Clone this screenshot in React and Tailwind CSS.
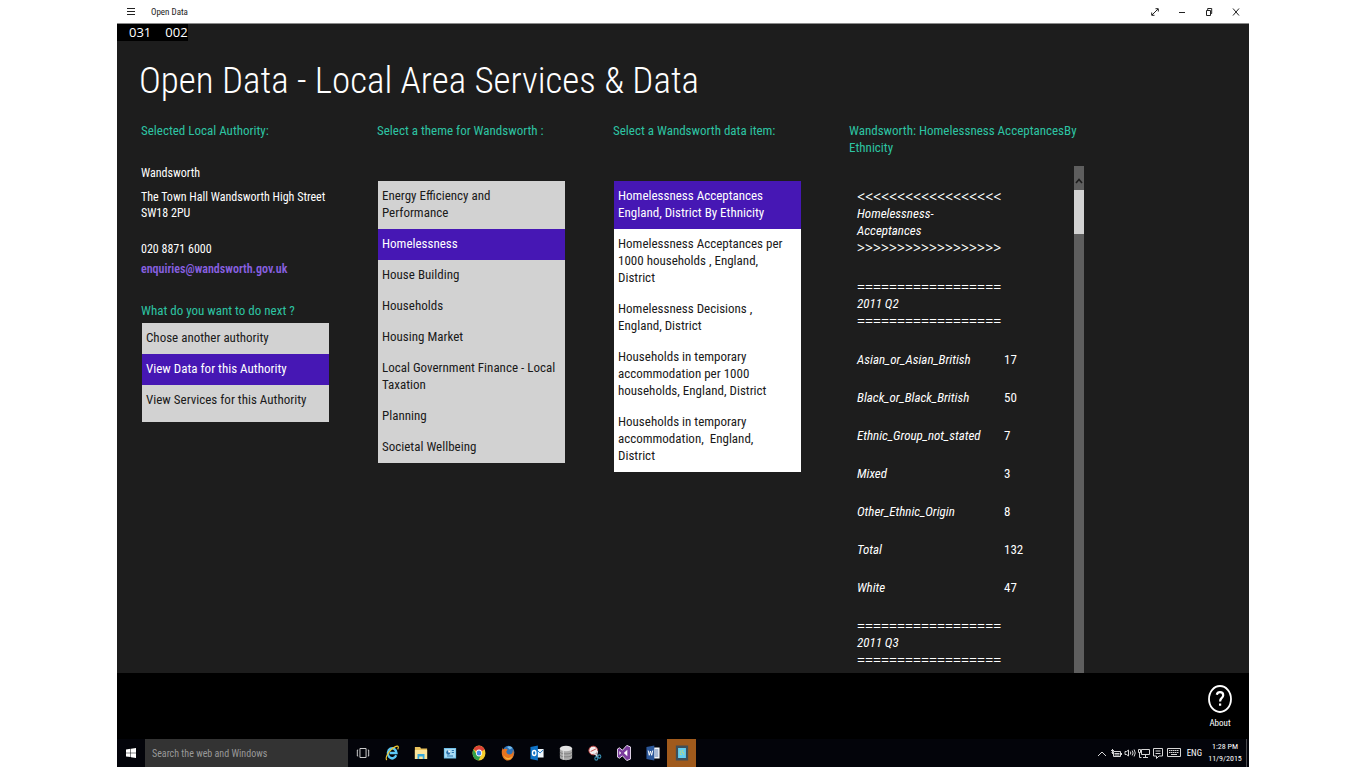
import { useState } from "react";

const nextSteps = ["Chose another authority", "View Data for this Authority", "View Services for this Authority"];

const themes = [
  "Energy Efficiency and Performance",
  "Homelessness",
  "House Building",
  "Households",
  "Housing Market",
  "Local Government Finance - Local Taxation",
  "Planning",
  "Societal Wellbeing",
];

const dataItems = [
  "Homelessness Acceptances England, District By Ethnicity",
  "Homelessness Acceptances per 1000 households , England, District",
  "Homelessness Decisions , England, District",
  "Households in temporary accommodation per 1000 households, England, District",
  "Households in temporary accommodation,\u00a0 England, District",
];

const figures = [
  ["Asian_or_Asian_British", 17],
  ["Black_or_Black_British", 50],
  ["Ethnic_Group_not_stated", 7],
  ["Mixed", 3],
  ["Other_Ethnic_Origin", 8],
  ["Total", 132],
  ["White", 47],
];

function OptionList({ label, items, initial, listClass, itemClass = "pr-1.5" }) {
  const [selected, setSelected] = useState(initial);
  return (
    <ul aria-label={label} className={`ml-px w-[187px] ${listClass}`}>
      {items.map((item, i) => (
        <li key={item}>
          <button
            type="button"
            onClick={() => setSelected(i)}
            className={`block w-full pt-1.5 pb-2 pl-1 text-left ${itemClass} ${
              i === selected ? "bg-[#4617b4] text-white" : "text-[#1a1a1a]"
            }`}
          >
            {item}
          </button>
        </li>
      ))}
    </ul>
  );
}

function Rule({ char }) {
  return <div className="font-['Noto_Sans'] text-[14px] leading-[17px] whitespace-nowrap not-italic">{char.repeat(18)}</div>;
}

function Banner({ open, close, children }) {
  return (
    <tr>
      <th colSpan={2} scope="colgroup" className="py-[11px] text-left font-normal italic">
        <Rule char={open} />
        <div className="w-[100px]">{children}</div>
        <Rule char={close} />
      </th>
    </tr>
  );
}

function TitleBar() {
  const button = "flex h-6 w-[27px] items-center justify-center";
  return (
    <header className="flex h-6 shrink-0 items-center border-b border-[#8a8a8a] bg-white text-[#222]">
      <button type="button" aria-label="Menu" className={button}>
        <svg className="h-2 w-2" viewBox="0 0 8 8" stroke="currentColor">
          <path d="M0 .5h8M0 3.5h8M0 6.5h8" />
        </svg>
      </button>
      <span className="ml-[7px] pt-0.5 text-[9px]">Open Data</span>
      <div className="ml-auto flex">
        <button type="button" aria-label="Full screen" className={button}>
          <svg className="h-2 w-2" viewBox="0 0 8 8" fill="none" stroke="currentColor">
            <path d="M1 7l6-6M4.5.7h2.8v2.8M.7 4.5v2.8h2.8" />
          </svg>
        </button>
        <button type="button" aria-label="Minimize" className={button}>
          <svg className="h-2 w-2" viewBox="0 0 8 8" stroke="currentColor">
            <path d="M1 4.5h6" />
          </svg>
        </button>
        <button type="button" aria-label="Restore" className={button}>
          <svg className="h-2 w-2" viewBox="0 0 8 8" fill="none" stroke="currentColor">
            <path d="M1.5 2.5h4v5h-4zM2.7 2.5v-2h4v5h-1.2" />
          </svg>
        </button>
        <button type="button" aria-label="Close" className={button}>
          <svg className="h-2 w-2" viewBox="0 0 8 8" stroke="currentColor">
            <path d="M1 .5l6 7M7 .5l-6 7" />
          </svg>
        </button>
      </div>
    </header>
  );
}

function ScrollBar() {
  return (
    <div className="w-2.5 shrink-0 bg-[#5e5e5e]">
      <div className="flex h-6 items-center justify-center pt-1.5">
        <svg className="h-1.5 w-2" viewBox="0 0 8 6" fill="none" stroke="#1d1d1d" strokeWidth="1.6">
          <path d="M1 5l3-3.5L7 5" />
        </svg>
      </div>
      <div className="h-11 bg-[#d2d2d2]" />
    </div>
  );
}

const taskIcons = [
  {
    name: "Task View",
    art: (
      <g fill="none" stroke="#d8d8d8">
        <path d="M4.5 3.5h7v9h-7zM2.5 5h-1v6h1M13.5 5h1v6h-1" />
      </g>
    ),
  },
  {
    name: "Internet Explorer",
    art: (
      <>
        <path d="M12.8 10.3a5 5 0 1 1 .4-2.3H5.2" fill="none" stroke="#5cc8f5" strokeWidth="2.6" />
        <path d="M2.2 15c-2.4-1.4.8-7 5-10.4C11 1.5 15 .2 15.2 2c.1.7-.2 1.5-.7 2.3" fill="none" stroke="#f3c92e" strokeWidth="1.3" />
      </>
    ),
  },
  {
    name: "File Explorer",
    art: (
      <>
        <path d="M1 2h6l1 1.5h7V14H1z" fill="#e9c25d" />
        <path d="M1 5h14v9H1z" fill="#fbe59b" />
        <path d="M4 9h8v5h-2v-2.5H6V14H4z" fill="#37a9dc" />
      </>
    ),
  },
  {
    name: "Control Panel",
    art: (
      <>
        <path d="M1 3h14v10.5H1z" fill="#6fc0ea" />
        <path d="M2 4h12v8.5H2z" fill="#a9dcf5" />
        <circle cx="6" cy="7.5" r="2.3" fill="#276ea8" />
        <path d="M6 7.5V5a2.5 2.5 0 0 1 2.5 2.5z" fill="#fff" />
        <path d="M10 5.5h2.5M10 7.5h2.5M4.5 11h7" stroke="#246fa9" />
      </>
    ),
  },
  {
    name: "Chrome",
    art: (
      <>
        <circle cx="8" cy="8" r="7.4" fill="#f6ce2e" />
        <path d="M8 8L1.7 4.2A7.4 7.4 0 0 1 14.5 4.5z" fill="#dd4337" />
        <path d="M1.7 4.2A7.4 7.4 0 0 0 7.5 15.4L10.5 9.5 8 8 5.2 9.5z" fill="#2fa04e" />
        <circle cx="8" cy="8" r="3.4" fill="#fff" />
        <circle cx="8" cy="8" r="2.6" fill="#4387ed" />
      </>
    ),
  },
  {
    name: "Firefox",
    art: (
      <>
        <circle cx="8.5" cy="7.5" r="6.8" fill="#2d72b8" />
        <path d="M7 2c2-1.5 5-.5 6 1l-3 1.500z" fill="#79bde8" />
        <path d="M2 2.5c0 1 .3 1.5.6 2C4 3.5 6 3.5 7.5 4.5L6 6.5c.5 3 4 4 6.5 2 1-1 1.2-2.500 1-4 3 5-.2 11-5.500 11S.2 10 1 5.5z" fill="#e8741f" />
        <path d="M3 10c2 3.500 7 4 10 1-1 3-4 4-6 3.500S3.300 12 3 10z" fill="#f7b438" />
      </>
    ),
  },
  {
    name: "Outlook",
    art: (
      <>
        <path d="M8 4h7.5v8.5H8z" fill="#f2f8fd" />
        <path d="M8 5l3.5 3L15 5" fill="none" stroke="#1272c4" />
        <path d="M.5 2L9 .5v15L.5 14z" fill="#0f72c6" />
        <ellipse cx="4.8" cy="8" rx="2" ry="2.5" fill="none" stroke="#fff" strokeWidth="1.5" />
      </>
    ),
  },
  {
    name: "Database",
    art: (
      <>
        <path d="M1 3.5v9c0 3.5 14 3.5 14 0v-9z" fill="#a9a9a9" />
        <ellipse cx="8" cy="3.5" rx="7" ry="2.8" fill="#e2e2e2" />
        <path d="M1 7c1 2.5 13 2.5 14 0M1 10c1 2.5 13 2.5 14 0" fill="none" stroke="#777" strokeWidth=".8" />
        <path d="M5 6v8.5" stroke="#dedede" />
      </>
    ),
  },
  {
    name: "Snipping Tool",
    art: (
      <>
        <ellipse cx="6" cy="5.5" rx="5" ry="4.3" fill="#f4eeee" stroke="#c94a4a" />
        <path d="M3 6.5l6-2.5" stroke="#c94a4a" />
        <path d="M6 8l5.5 3.5M11 6l-1.5 6" stroke="#d5dde2" strokeWidth="1.2" />
        <g fill="none" stroke="#3a91b4" strokeWidth="1.2">
          <circle cx="13" cy="11.5" r="1.7" />
          <circle cx="9.5" cy="13.5" r="1.7" />
        </g>
      </>
    ),
  },
  {
    name: "Visual Studio",
    art: (
      <>
        <path d="M11.2.4L15.5 2v12l-4.3 1.6L6.2 10.8 2.8 13.2.5 12V4l2.3-1.2 3.4 2.4z" fill="#7a3b9c" stroke="#f1e8f6" />
        <path d="M11.8 4.8v6.4L7.8 8zM2.7 6v4l2-2z" fill="#fff" />
      </>
    ),
  },
  {
    name: "Word",
    art: (
      <>
        <path d="M8 2.5h7.5v11H8z" fill="#f3f6fb" />
        <path d="M10 5h4M10 7h4M10 9h4M10 11h4" stroke="#2b579a" strokeWidth=".8" />
        <path d="M.5 2L9.5.5v15L.5 14z" fill="#2b579a" />
        <path d="M2.5 5.5l1.2 4.8 1.4-4.3 1.4 4.3 1.2-4.8" fill="none" stroke="#fff" />
      </>
    ),
  },
  {
    name: "Open Data",
    active: true,
    art: (
      <>
        <path d="M1 .5h14v15H1z" fill="#3f4e57" />
        <path d="M3.5 3h9v10h-9z" fill="#64cdf0" />
        <path d="M6 5.5v4h2M9.5 5.5H8v2h2v2.5" fill="none" stroke="#b5d58b" />
      </>
    ),
  },
];

const trayIcons = [
  { name: "Show hidden icons", d: "M2 9l4-4 4 4" },
  { name: "Battery", d: "M3.5 4.5h7v5h-7zM11.5 6v2M4.5 6.5h5M4.5 8h5M1 3.5h3M1.5 5.5h2M2.5 2v5" },
  { name: "Volume", d: "M1 4.5h1.5L4.5 3v6L2.5 7.5H1zM6.3 4.5q1 1.5 0 3M8.2 3.5q1.8 2.5 0 5M10.1 2.5q2.3 3.5 0 7" },
  { name: "Network", d: "M3.5 2.5h8v5h-8zM7.5 7.5v3M5 10.5h5M.5 2.5h2v3h-2zM1.5 5.5v5h2" },
  { name: "Action center", d: "M1.5 1.5h9V9H7l-2.5 2.5V9h-3zM3.5 4h5M3.5 6.5h5" },
];

function Taskbar() {
  return (
    <footer className="flex h-7 shrink-0 items-center bg-[#03040a] text-white">
      <button type="button" aria-label="Start" className="flex h-7 w-7 items-center justify-center">
        <svg className="h-2.5 w-2.5" viewBox="0 0 10 10" fill="#fff">
          <path d="M0 1.5l4.5-.7v3.900H0zM5 .7L10 0v4.700H5zM0 5.200h4.500v3.900L0 8.500zM5 5.200h5V10l-5-.7z" />
        </svg>
      </button>
      <input
        type="search"
        aria-label="Search the web and Windows"
        placeholder="Search the web and Windows"
        className="h-7 w-[203px] bg-[#333] px-[7px] text-[10px] placeholder:text-[#999] focus:outline-none"
      />
      {taskIcons.map((icon) => (
        <button
          key={icon.name}
          type="button"
          aria-label={icon.name}
          className={`flex h-7 w-[29px] items-center justify-center ${icon.active ? "bg-[#a05a1c]" : ""}`}
        >
          <svg className="h-4 w-3.5" viewBox="0 0 16 16" preserveAspectRatio="none">
            {icon.art}
          </svg>
        </button>
      ))}
      <div className="ml-auto flex h-7 items-center">
        {trayIcons.map((icon) => (
          <button key={icon.name} type="button" aria-label={icon.name} className="flex h-7 w-3.5 items-center justify-center">
            <svg className="h-3 w-3" viewBox="0 0 12 12" fill="none" stroke="#d6d6d6">
              <path d={icon.d} />
            </svg>
          </button>
        ))}
        <button type="button" aria-label="Touch keyboard" className="ml-0.5 flex h-7 w-3.5 items-center justify-center">
          <svg className="h-2.5 w-3.5" viewBox="0 0 14 10" fill="none" stroke="#d6d6d6">
            <path d="M.5.5h13v8H.5z" />
            <path d="M2 2.5h10M2 4.5h10" strokeDasharray="1.5 .5" />
            <path d="M4 6.5h6" />
          </svg>
        </button>
        <button type="button" className="ml-1.5 text-[9px]">
          ENG
        </button>
        <time dateTime="2015-11-09T13:28" className="mr-1 ml-1.5 w-[34px] text-center text-[8px] leading-3">
          1:28 PM
          <br />
          11/9/2015
        </time>
        <div className="mr-0.5 h-7 w-px bg-[#4a4a4e]" />
      </div>
    </footer>
  );
}

export default function App() {
  return (
    <div className="flex h-screen flex-col bg-white px-[117px] pb-px font-['Roboto_Condensed','Roboto',sans-serif] text-[13px] leading-[17px]">
      <TitleBar />
      <main className="flex min-h-0 flex-1 flex-col bg-[#1d1d1d] text-white">
        <div className="flex h-[17px] w-[71px] shrink-0 gap-3.5 bg-black pl-3 font-['Open_Sans'] text-[13px] leading-4 font-medium">
          <span>031</span>
          <span>002</span>
        </div>
        <h1 className="mt-[17px] mb-[18px] pl-[22px] text-[37px] leading-[46px] font-light">Open Data - Local Area Services &amp; Data</h1>

        <div className="flex min-h-0 flex-1 pl-6">
          <section className="w-[236px] shrink-0">
            <h2 className="mb-[26px] text-[#2dc4a3]">Selected Local Authority:</h2>
            <div className="text-[12px]">
              <p>Wandsworth</p>
              <address className="mt-[7px] leading-4 not-italic">
                The Town Hall Wandsworth High Street
                <br />
                SW18 2PU
              </address>
              <p className="mt-5">020 8871 6000</p>
              <a href="mailto:enquiries@wandsworth.gov.uk" className="mt-[3px] block font-semibold text-[#8860e0]">
                enquiries@wandsworth.gov.uk
              </a>
            </div>
            <h2 className="mt-6 mb-1 text-[#2dc4a3]">What do you want to do next ?</h2>
            <OptionList label="What do you want to do next ?" items={nextSteps} initial={1} listClass="bg-[#d2d2d2] pb-1.5" />
          </section>

          <section className="w-[236px] shrink-0">
            <h2 className="mb-[42px] text-[#2dc4a3]">Select a theme for Wandsworth :</h2>
            <OptionList label="Themes" items={themes} initial={1} listClass="bg-[#d2d2d2]" />
          </section>

          <section className="w-[236px] shrink-0">
            <h2 className="mb-[42px] text-[#2dc4a3]">Select a Wandsworth data item:</h2>
            <OptionList label="Data items" items={dataItems} initial={0} listClass="bg-white" itemClass="pr-3.5" />
          </section>

          <section className="flex w-[235px] min-w-0 flex-col">
            <h2 className="mb-2.5 text-[#2dc4a3]">Wandsworth: Homelessness AcceptancesBy Ethnicity</h2>
            <div className="flex min-h-0 flex-1">
              <div className="min-w-0 flex-1 overflow-hidden pt-[11px] pl-2">
                <table className="w-full">
                  <tbody>
                    <Banner open="<" close=">">
                      Homelessness-Acceptances
                    </Banner>
                    <Banner open="=" close="=">
                      2011 Q2
                    </Banner>
                    {figures.map(([group, count]) => (
                      <tr key={group} className="h-[38px]">
                        <th scope="row" className="w-[147px] text-left font-normal italic">
                          {group}
                        </th>
                        <td>{count}</td>
                      </tr>
                    ))}
                    <Banner open="=" close="=">
                      2011 Q3
                    </Banner>
                  </tbody>
                </table>
              </div>
              <ScrollBar />
            </div>
          </section>
        </div>
      </main>

      <div className="flex h-[66px] shrink-0 justify-end bg-black pr-3 text-white">
        <button type="button" className="flex w-[34px] flex-col items-center gap-0.5 pt-3 text-[9px]">
          <svg className="h-7 w-6" viewBox="0 0 24 28" fill="none" stroke="#fff" strokeWidth="1.8">
            <ellipse cx="12" cy="14" rx="11" ry="13" />
            <path d="M8.8 9.8q.5-2.6 3.2-2.6 3.2 0 3.2 3 0 1.6-1.6 3-1.5 1.3-1.5 3.4M12.1 18.5v2.3" strokeWidth="2.2" />
          </svg>
          About
        </button>
      </div>
      <Taskbar />
    </div>
  );
}
